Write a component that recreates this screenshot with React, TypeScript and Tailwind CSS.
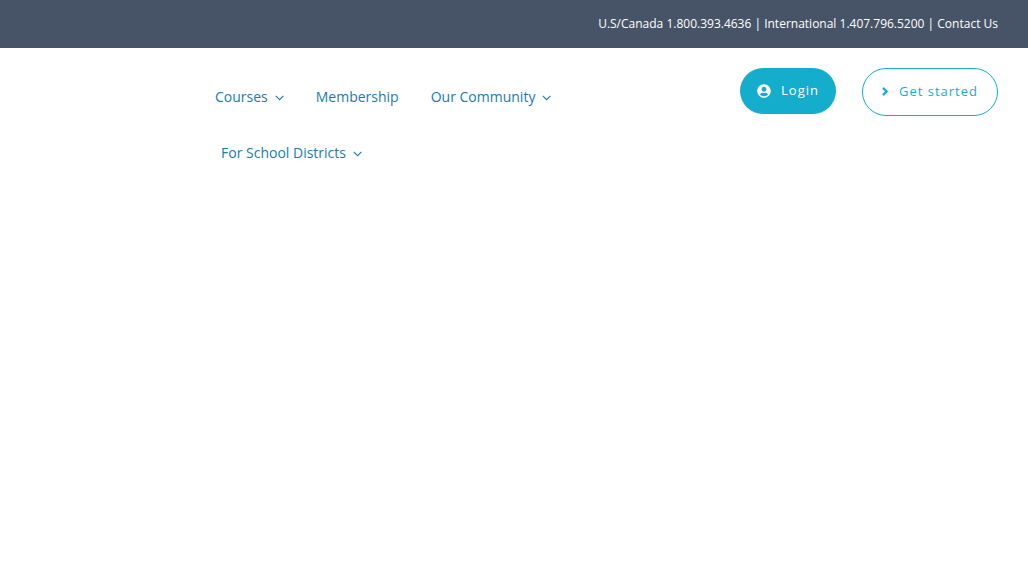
import React from "react";
import { FaUserCircle } from "react-icons/fa";

type NavItem = { label: string; menu: boolean };

const firstRow: NavItem[] = [
  { label: "Courses", menu: true },
  { label: "Membership", menu: false },
  { label: "Our Community", menu: true },
];

function CaretDown() {
  return (
    <svg viewBox="0 0 9 6" className="mt-[2px] h-[6px] w-[9px]" fill="none" stroke="currentColor" strokeWidth="1.1" aria-hidden="true">
      <path d="M0.8 0.9 4.6 4.7 8.4 0.9" />
    </svg>
  );
}

function CaretRight() {
  return (
    <svg viewBox="0 0 6 9" className="h-[9px] w-[6px]" fill="none" stroke="currentColor" strokeWidth="2.2" aria-hidden="true">
      <path d="M1 0.9 4.6 4.5 1 8.1" />
    </svg>
  );
}

function NavLink({ label, menu }: NavItem) {
  return (
    <a href="#" className="flex items-center gap-[7px] whitespace-nowrap">
      {label}
      {menu && <CaretDown />}
    </a>
  );
}

export default function App() {
  return (
    <div className="min-h-screen bg-white font-['Open_Sans',sans-serif]">
      <div className="flex h-12 items-center justify-end bg-[#475468] px-[30px] text-xs text-white">
        <p>
          U.S/Canada 1.800.393.4636 | International 1.407.796.5200 |{" "}
          <a href="#">Contact Us</a>
        </p>
      </div>
      <header className="flex items-start justify-between pt-5 pr-[30px] pl-[215px]">
        <nav className="pt-px text-sm text-[#1b7bad]">
          <div className="flex h-14 items-center gap-8">
            {firstRow.map((item) => (
              <NavLink key={item.label} {...item} />
            ))}
          </div>
          <div className="flex h-14 items-center pl-[6px]">
            <NavLink label="For School Districts" menu />
          </div>
        </nav>
        <div className="flex items-start gap-[26px] text-[13px] tracking-[1px]">
          <button className="flex h-[46px] items-center gap-[10px] rounded-full bg-[#14adcc] px-[17px] pb-px text-white">
            <FaUserCircle className="size-[14px]" />
            Login
          </button>
          <button className="flex h-12 items-center gap-[11px] rounded-full border border-[#14adcc] px-[19px] pb-px text-[#14adcc]">
            <CaretRight />
            Get started
          </button>
        </div>
      </header>
    </div>
  );
}
